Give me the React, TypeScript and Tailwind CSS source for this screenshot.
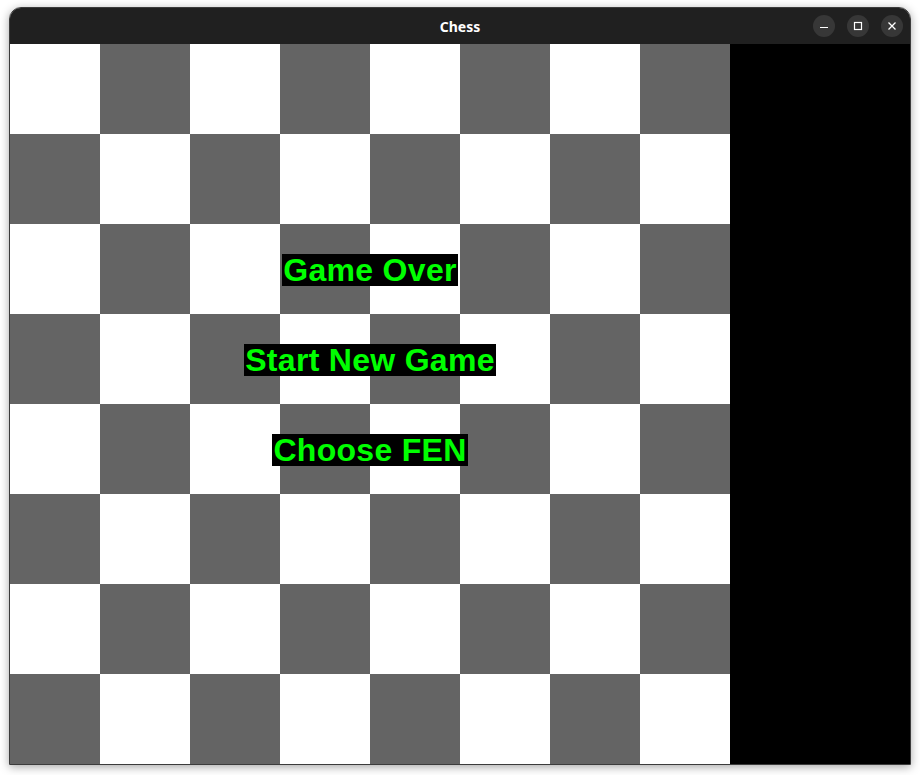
export default function App() {
  const squares = Array.from({ length: 64 }, (_, i) => {
    const r = Math.floor(i / 8)
    const c = i % 8
    return (r + c) % 2 === 0
  })

  return (
    <div className="w-[920px] h-[775px] bg-white pt-[7px] pl-[9px]">
      <div className="w-[902px] h-[758px] border border-[#3c3c3c] rounded-t-[12px] overflow-hidden shadow-[0_2px_10px_rgba(0,0,0,0.35)] flex flex-col">
        {/* title bar */}
        <div className="h-[36px] bg-[#202020] relative flex items-center justify-center shrink-0">
          <span className="text-white text-[14px] font-bold font-['Noto_Sans',sans-serif]">Chess</span>
          <div className="absolute right-[7px] top-[7px] flex gap-[12px]">
            <div className="w-[22px] h-[22px] rounded-full bg-[#373737] flex items-center justify-center">
              <svg width="10" height="10" viewBox="0 0 10 10">
                <line x1="1" y1="6.5" x2="9" y2="6.5" stroke="white" strokeWidth="1.2" />
              </svg>
            </div>
            <div className="w-[22px] h-[22px] rounded-full bg-[#373737] flex items-center justify-center">
              <svg width="10" height="10" viewBox="0 0 10 10">
                <rect x="1.5" y="1.5" width="7" height="7" fill="none" stroke="white" strokeWidth="1.2" />
              </svg>
            </div>
            <div className="w-[22px] h-[22px] rounded-full bg-[#373737] flex items-center justify-center">
              <svg width="10" height="10" viewBox="0 0 10 10">
                <path d="M1.5 1.5 L8.5 8.5 M8.5 1.5 L1.5 8.5" stroke="white" strokeWidth="1.3" />
              </svg>
            </div>
          </div>
        </div>

        {/* content */}
        <div className="flex h-[720px]">
          <div className="relative w-[720px] h-[720px]">
            <div className="grid grid-cols-8 w-[720px] h-[720px]">
              {squares.map((light, i) => (
                <div key={i} className={light ? 'bg-white' : 'bg-[#646464]'} />
              ))}
            </div>
            <div className="absolute left-0 right-0 top-[180px] flex flex-col font-['Liberation_Sans',Arial,sans-serif] font-bold text-[32px] tracking-[0.3px] text-[#00ff00]">
              <div className="h-[90px] flex items-center justify-center pt-[1px]">
                <span className="bg-black leading-[32px] px-[1px]">Game Over</span>
              </div>
              <div className="h-[90px] flex items-center justify-center pt-[1px]">
                <span className="bg-black leading-[32px] px-[1px]">Start New Game</span>
              </div>
              <div className="h-[90px] flex items-center justify-center pt-[1px]">
                <span className="bg-black leading-[32px] px-[1px]">Choose FEN</span>
              </div>
            </div>
          </div>
          <div className="flex-1 bg-black" />
        </div>
      </div>
    </div>
  )
}
